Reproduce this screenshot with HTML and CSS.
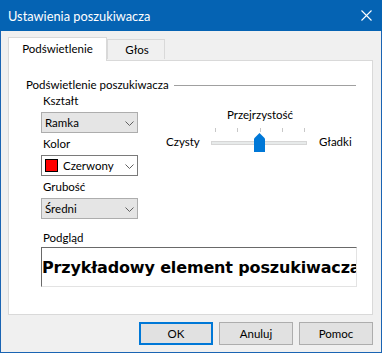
FILE: index.html
```html
<!DOCTYPE html>
<html lang="pl">
  <head>
    <meta charset="UTF-8" />
    <title>Ustawienia poszukiwacza</title>
    <link rel="stylesheet" href="styles.css">
  </head>
  <body>
    <div class="window">
      <!-- Title bar -->
      <div class="titlebar">
        <span class="title">Ustawienia poszukiwacza</span>
        <span class="close">
          <svg width="11" height="11" viewBox="0 0 11 11">
            <path d="M0.5 0.5 L10.5 10.5 M10.5 0.5 L0.5 10.5" stroke="#fff" stroke-width="1.1" fill="none" />
          </svg>
        </span>
      </div>

      <div class="dialog">
        <div class="tabs">
          <div class="tab active">Podświetlenie</div>
          <div class="tab">Głos</div>
        </div>

        <div class="panel">
          <div class="group-title">
            <span>Podświetlenie poszukiwacza</span>
            <span class="group-line"></span>
          </div>

          <div class="settings">
            <div class="fields">
              <label class="field-label">Kształt</label>
              <div class="combo readonly">
                <span class="combo-text">Ramka</span>
                <span class="combo-arrow">
                  <svg width="9" height="5" viewBox="0 0 9 5"><path d="M0.5 0.5 L4.5 4.5 L8.5 0.5" stroke="#606060" fill="none" /></svg>
                </span>
              </div>

              <label class="field-label">Kolor</label>
              <div class="combo">
                <span class="swatch"></span>
                <span class="combo-text">Czerwony</span>
                <span class="combo-arrow">
                  <svg width="9" height="5" viewBox="0 0 9 5"><path d="M0.5 0.5 L4.5 4.5 L8.5 0.5" stroke="#606060" fill="none" /></svg>
                </span>
              </div>

              <label class="field-label">Grubość</label>
              <div class="combo readonly">
                <span class="combo-text">Średni</span>
                <span class="combo-arrow">
                  <svg width="9" height="5" viewBox="0 0 9 5"><path d="M0.5 0.5 L4.5 4.5 L8.5 0.5" stroke="#606060" fill="none" /></svg>
                </span>
              </div>
            </div>

            <!-- Transparency slider -->
            <div class="slider-row">
              <span class="slider-end">Czysty</span>
              <div class="slider">
                <div class="slider-label">Przejrzystość</div>
                <div class="scale">
                  <div class="ticks">
                    <span></span><span></span><span></span><span></span><span></span>
                  </div>
                  <div class="track"></div>
                  <svg class="thumb" width="11" height="19" viewBox="0 0 11 19">
                    <path d="M0 5.5 L5.5 0 L11 5.5 V19 H0 Z" fill="#0078d7" />
                  </svg>
                </div>
              </div>
              <span class="slider-end right">Gładki</span>
            </div>
          </div>

          <div class="preview-block">
            <label class="field-label">Podgląd</label>
            <div class="preview">
              <span>Przykładowy element poszukiwacza</span>
            </div>
          </div>
        </div>

        <div class="buttons">
          <button class="btn default">OK</button>
          <button class="btn">Anuluj</button>
          <button class="btn">Pomoc</button>
        </div>
      </div>
    </div>
  </body>
</html>
```

FILE: styles.css
```css
body {
  margin: 0;
  padding: 0;
  font-family: Lato, "Noto Sans", sans-serif;
  font-size: 11.5px;
  color: #000;
  background: #f0f0f0;
}

.window {
  width: 382px;
  height: 353px;
  box-sizing: border-box;
  border: 1px solid #1a64b3;
  border-top: none;
  background: #f0f0f0;
  display: flex;
  flex-direction: column;
}

/* Title bar */
.titlebar {
  height: 31px;
  background: #0563b3;
  color: #fff;
  display: flex;
  align-items: center;
  justify-content: space-between;
  padding: 0 10px 0 8px;
  margin: 0 -1px;
  flex-shrink: 0;
}

.title {
  font-size: 12.8px;
  line-height: 16px;
}

.close {
  display: flex;
  width: 11px;
  height: 11px;
}

/* Dialog body */
.dialog {
  flex: 1;
  display: flex;
  flex-direction: column;
  padding: 6px 8px 0 7px;
}

.tabs {
  display: flex;
  align-items: flex-end;
  height: 23px;
  position: relative;
  z-index: 1;
}

.tab {
  width: 58px;
  height: 20px;
  box-sizing: border-box;
  border: 1px solid #d9d9d9;
  border-bottom: none;
  background: #f0f0f0;
  display: flex;
  align-items: center;
  justify-content: center;
  line-height: 16px;
  margin-bottom: 1px;
  padding-left: 2px;
}

.tab.active {
  width: 99px;
  height: 24px;
  background: #fff;
  padding: 0 0 2px 0;
  margin-bottom: -1px;
}

.panel {
  height: 255px;
  box-sizing: border-box;
  border: 1px solid #d9d9d9;
  background: #fff;
  padding: 16px 0 0 17px;
}

.group-title {
  display: flex;
  align-items: center;
  line-height: 16px;
  height: 16px;
  white-space: nowrap;
}

.group-line {
  flex: 1;
  height: 1px;
  background: #a0a0a0;
  margin: 0 16px 0 5px;
}

.settings {
  display: flex;
  padding-left: 15px;
}

.fields {
  width: 97px;
  display: flex;
  flex-direction: column;
}

.field-label {
  display: block;
  line-height: 16px;
  padding-left: 2px;
  margin-top: 3px;
}

.fields .field-label:first-child {
  margin-top: 0;
}

.combo {
  margin-top: 3px;
  height: 21px;
  box-sizing: border-box;
  border: 1px solid #7a7a7a;
  background: #fff;
  display: flex;
  align-items: center;
  padding: 0 0 0 3px;
}

.combo.readonly {
  background: #e5e5e5;
  border-color: #adadad;
}

.combo-text {
  flex: 1;
  line-height: 16px;
}

.swatch {
  width: 11px;
  height: 11px;
  background: #ff0000;
  border: 1px solid #000;
  margin-right: 5px;
}

.combo-arrow {
  width: 15px;
  display: flex;
  justify-content: center;
  padding-top: 1px;
}

/* Slider */
.slider-row {
  display: flex;
  margin-left: 28px;
  margin-top: 14px;
  height: 46px;
}

.slider-end {
  width: 40px;
  line-height: 16px;
  align-self: flex-end;
  margin-bottom: 3px;
}

.slider-end.right {
  width: auto;
  margin-left: 7px;
}

.slider {
  width: 106px;
  display: flex;
  flex-direction: column;
}

.slider-label {
  text-align: center;
  line-height: 16px;
  margin-left: 2px;
}

.scale {
  position: relative;
  height: 30px;
}

.ticks {
  display: flex;
  justify-content: space-between;
  padding: 5px 7px 0 9px;
}

.ticks span {
  width: 1px;
  height: 4px;
  background: #c8c8c8;
}

.track {
  margin: 9px 5px 0 5px;
  height: 4px;
  box-sizing: border-box;
  background: #e7eaea;
  border: 1px solid #d6d6d6;
}

.thumb {
  position: absolute;
  left: 48px;
  top: 10px;
}

/* Preview */
.preview-block {
  padding-left: 15px;
  margin-top: 11px;
}

.preview {
  margin-top: 1px;
  width: 316px;
  height: 40px;
  box-sizing: border-box;
  border: 1px solid #e3e3e3;
  border-left-color: #696969;
  border-top-color: #696969;
  overflow: hidden;
  white-space: nowrap;
  display: flex;
  align-items: center;
}

.preview span {
  font-family: "DejaVu Sans", sans-serif;
  font-weight: bold;
  font-size: 16px;
  letter-spacing: -0.15px;
}

/* Buttons */
.buttons {
  display: flex;
  justify-content: flex-end;
  gap: 6px;
  margin-top: 7px;
}

.btn {
  width: 74px;
  height: 23px;
  box-sizing: border-box;
  border: 1px solid #adadad;
  background: #e1e1e1;
  font-family: Lato, "Noto Sans", sans-serif;
  font-size: 11.5px;
  padding: 0;
  color: #000;
}

.btn.default {
  border: 2px solid #0078d7;
}
```
